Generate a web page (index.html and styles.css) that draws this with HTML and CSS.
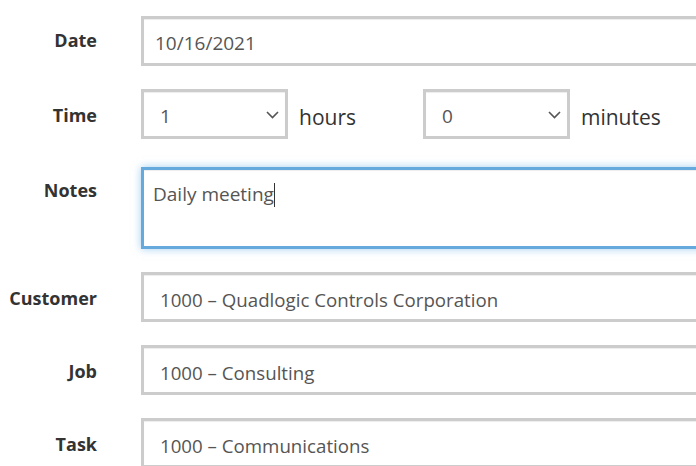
FILE: index.html
```html
<!DOCTYPE html>
<html lang="en">
<head>
    <meta charset="UTF-8">
    <meta name="viewport" content="width=device-width, initial-scale=1.0">
    <title>Time entry</title>
    <link rel="stylesheet" href="styles.css">
</head>
<body>
    <form class="entry">
        <div class="row first">
            <label class="label" for="date">Date</label>
            <input class="field" id="date" type="text" value="10/16/2021">
        </div>

        <div class="row">
            <label class="label" for="hours">Time</label>
            <div class="time">
                <div class="pick">
                    <select class="field small" id="hours">
                        <option>1</option>
                    </select>
                    <svg class="chev" width="13" height="8" viewBox="0 0 13 8"><path d="M1 1l5.5 5.5L12 1" fill="none" stroke="#555" stroke-width="1.6"/></svg>
                </div>
                <span class="unit">hours</span>
                <div class="pick">
                    <select class="field small" id="minutes">
                        <option>0</option>
                    </select>
                    <svg class="chev" width="13" height="8" viewBox="0 0 13 8"><path d="M1 1l5.5 5.5L12 1" fill="none" stroke="#555" stroke-width="1.6"/></svg>
                </div>
                <span class="unit">minutes</span>
            </div>
        </div>

        <div class="row notes-row">
            <label class="label" for="notes">Notes</label>
            <div class="field notes" id="notes">Daily meeting<span class="caret"></span></div>
        </div>

        <div class="row">
            <label class="label" for="customer">Customer</label>
            <div class="field choice" id="customer">1000 – Quadlogic Controls Corporation</div>
        </div>

        <div class="row">
            <label class="label" for="job">Job</label>
            <div class="field choice" id="job">1000 – Consulting</div>
        </div>

        <div class="row">
            <label class="label" for="task">Task</label>
            <div class="field choice" id="task">1000 – Communications</div>
        </div>
    </form>
</body>
</html>
```

FILE: styles.css
```css
body {
    margin: 0;
    background: #fff;
    overflow: hidden;
    font-family: "Open Sans", sans-serif;
}

.entry {
    width: 900px;
    padding-top: 16px;
    display: flex;
    flex-direction: column;
    gap: 23px;
}

.row {
    display: grid;
    grid-template-columns: 97px 1fr;
    column-gap: 44px;
    align-items: center;
}

.label {
    text-align: right;
    font-weight: bold;
    font-size: 18px;
    color: #333;
    padding-top: 2px;
}

.first .label {
    padding-top: 0;
    margin-top: -2px;
}

.field {
    box-sizing: border-box;
    height: 50px;
    width: 100%;
    margin: 0;
    border: 3px solid #ccc;
    border-radius: 0;
    background: #fff;
    box-shadow: inset 0 1px 1px rgba(0, 0, 0, .075);
    padding: 4px 11px 0;
    font-family: "Open Sans", sans-serif;
    font-size: 19px;
    color: #555;
    outline: none;
}

.time {
    display: flex;
    align-items: center;
}

.pick {
    position: relative;
}

.small {
    width: 147px;
    padding-left: 16px;
    appearance: none;
    -webkit-appearance: none;
}

.chev {
    position: absolute;
    right: 9px;
    top: 22px;
}

.unit {
    font-size: 21px;
    color: #333;
    margin-left: 11px;
    padding-top: 5px;
}

.unit:first-of-type {
    margin-right: 67px;
}

.notes-row {
    align-items: start;
    margin-top: 5px;
}

.notes-row .label {
    margin-top: 9px;
}

.notes {
    height: 82px;
    padding: 10px 9px;
    border-color: #66a9dd;
    box-shadow: inset 0 1px 1px rgba(0, 0, 0, .075), 0 0 8px rgba(102, 175, 233, .6);
    line-height: 28px;
}

.caret {
    display: inline-block;
    width: 1px;
    height: 24px;
    background: #333;
    vertical-align: -6px;
}

.choice {
    display: flex;
    align-items: center;
    padding-left: 16px;
    font-size: 18.7px;
}
```
